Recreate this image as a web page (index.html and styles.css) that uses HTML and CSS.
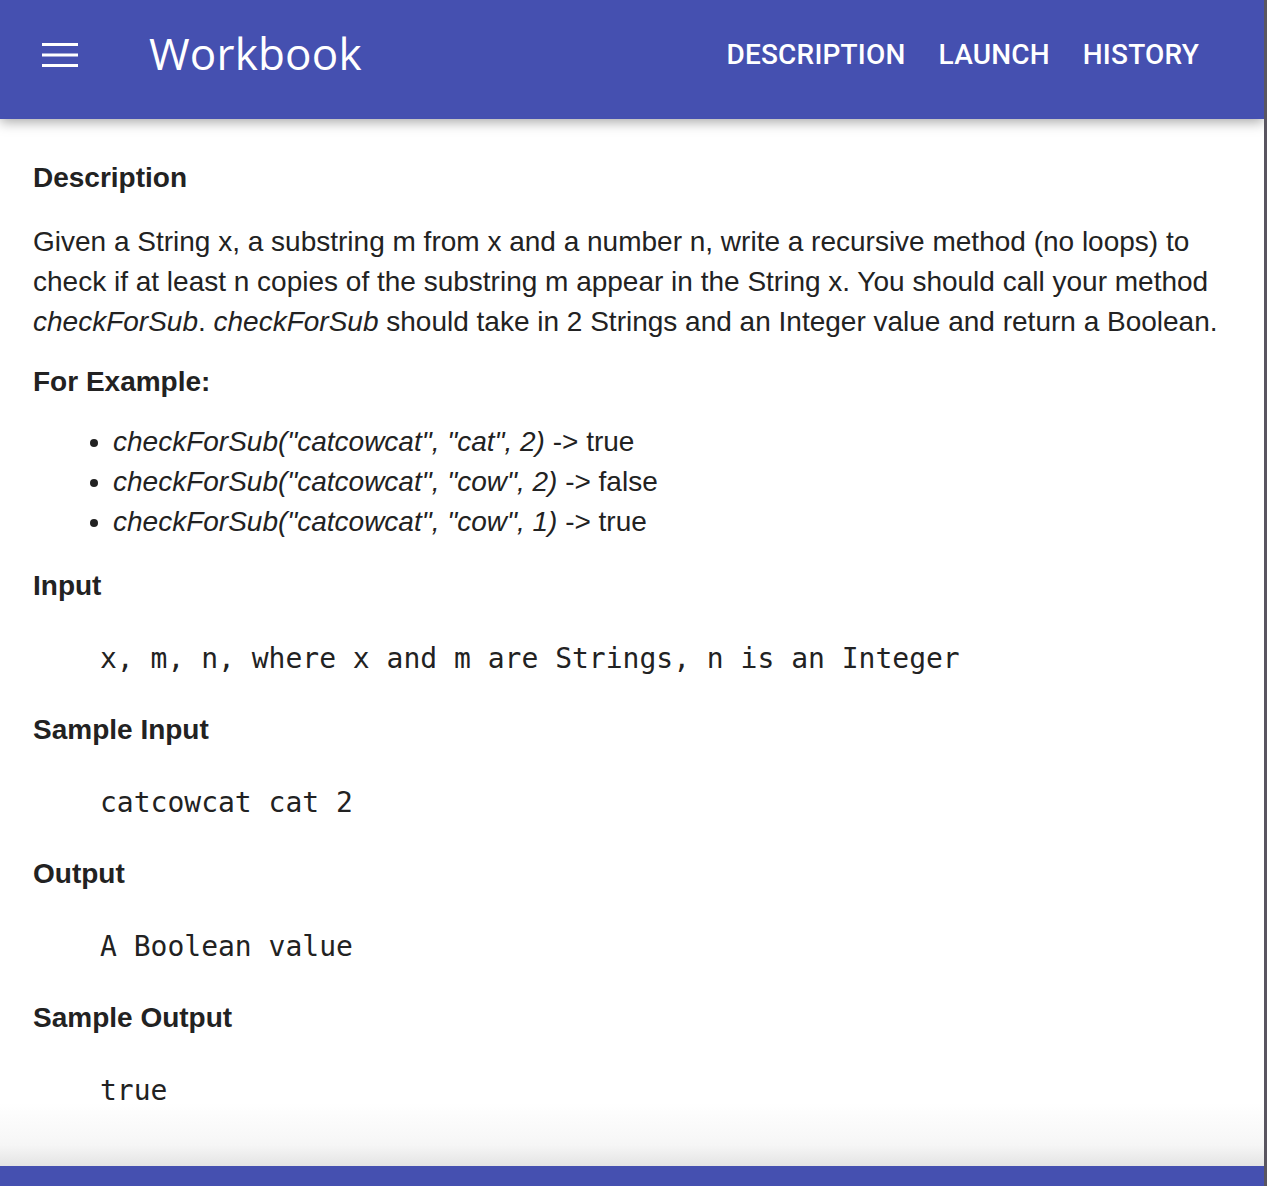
FILE: index.html
```html
<!DOCTYPE html>
<html>
<head>
<meta charset="utf-8">
<title>Workbook</title>
<link rel="stylesheet" href="styles.css">
</head>
<body>
<div class="frame">
  <header class="appbar">
    <button class="menu" aria-label="menu">
      <svg width="36" height="24" viewBox="0 0 36 24"><rect x="0" y="0" width="36" height="3" fill="#fff"/><rect x="0" y="10.5" width="36" height="3" fill="#fff"/><rect x="0" y="21" width="36" height="3" fill="#fff"/></svg>
    </button>
    <h1 class="title">Workbook</h1>
    <nav class="nav">
      <a class="nav-link">DESCRIPTION</a>
      <a class="nav-link">LAUNCH</a>
      <a class="nav-link">HISTORY</a>
    </nav>
  </header>
  <main class="content">
    <h2 class="heading">Description</h2>
    <p class="para">Given a String x, a substring m from x and a number n, write a recursive method (no loops) to check if at least n copies of the substring m appear in the String x. You should call your method <em>checkForSub</em>. <em>checkForSub</em> should take in 2 Strings and an Integer value and return a Boolean.</p>
    <h2 class="heading">For Example:</h2>
    <ul class="examples">
      <li><em>checkForSub("catcowcat", "cat", 2)</em> -&gt; true</li>
      <li><em>checkForSub("catcowcat", "cow", 2)</em> -&gt; false</li>
      <li><em>checkForSub("catcowcat", "cow", 1)</em> -&gt; true</li>
    </ul>
    <h2 class="heading">Input</h2>
    <pre class="code">x, m, n, where x and m are Strings, n is an Integer</pre>
    <h2 class="heading">Sample Input</h2>
    <pre class="code">catcowcat cat 2</pre>
    <h2 class="heading">Output</h2>
    <pre class="code">A Boolean value</pre>
    <h2 class="heading">Sample Output</h2>
    <pre class="code">true</pre>
  </main>
  <footer class="footer"></footer>
</div>
</body>
</html>
```
FILE: styles.css
```css
html, body {
  margin: 0;
  padding: 0;
  background: #ffffff;
}
.frame {
  width: 1264px;
  height: 1186px;
  border-right: 3px solid #595560;
  display: flex;
  flex-direction: column;
  overflow: hidden;
  font-family: "Liberation Sans", Arial, sans-serif;
  color: #222222;
}
.appbar {
  height: 119px;
  flex: none;
  background: #4550b0;
  display: flex;
  align-items: center;
  box-shadow: 0 3px 12px rgba(0,0,0,0.35);
  position: relative;
  z-index: 2;
  padding-bottom: 10px;
  box-sizing: border-box;
}
.menu {
  background: none;
  border: 0;
  padding: 0;
  margin-left: 42px;
  width: 36px;
  height: 24px;
  display: flex;
}
.title {
  margin: 0 0 4px 71px;
  font-family: "Open Sans", sans-serif;
  font-weight: 400;
  font-size: 44px;
  color: #ffffff;
  letter-spacing: 0.2px;
}
.nav {
  margin-left: auto;
  margin-right: 65px;
  display: flex;
  gap: 33px;
}
.nav-link {
  font-family: Roboto, sans-serif;
  font-weight: 500;
  font-size: 28px;
  color: #ffffff;
  letter-spacing: 0.2px;
}
.content {
  flex: 1;
  padding: 39px 33px 0 33px;
  background: linear-gradient(to bottom, #ffffff 0, #ffffff 94%, #f6f6f6 98%, #e4e4e4 100%);
}
.heading {
  margin: 0;
  font-size: 28px;
  font-weight: 700;
  line-height: 40px;
}
.para {
  margin: 24px 0 20px 0;
  font-size: 28px;
  line-height: 40px;
}
.para em, .examples em { font-style: italic; }
.examples {
  margin: 20px 0 24px 0;
  padding-left: 80px;
  font-size: 28px;
  line-height: 40px;
}
.code {
  margin: 33px 0 31px 67px;
  font-family: "DejaVu Sans Mono", monospace;
  font-size: 28px;
  line-height: 40px;
  color: #222;
}
.footer {
  height: 20px;
  flex: none;
  background: #4550b0;
}
```
